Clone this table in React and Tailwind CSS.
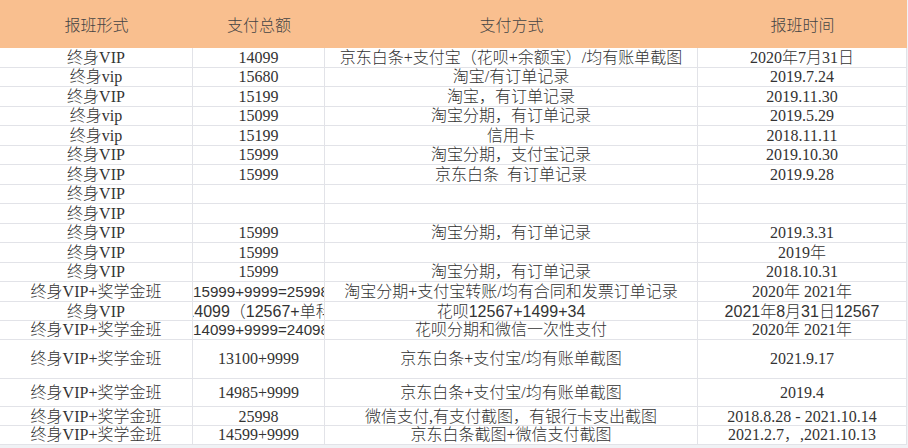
import React from 'react';

const serif = { fontFamily: '"Liberation Serif", "Noto Sans CJK SC", serif' };

// s: cells drawn in the sans font (Excel's default font in those cells)
// l: long numbers that run past the left-aligned cell edge
const rows = [
  { h: 'h-[19.5px]', c: ['终身VIP', '14099', '京东白条+支付宝（花呗+余额宝）/均有账单截图', '2020年7月31日'] },
  { h: 'h-[19.5px]', c: ['终身vip', '15680', '淘宝/有订单记录', '2019.7.24'] },
  { h: 'h-[19.5px]', c: ['终身VIP', '15199', '淘宝，有订单记录', '2019.11.30'] },
  { h: 'h-[19.5px]', c: ['终身vip', '15099', '淘宝分期，有订单记录', '2019.5.29'] },
  { h: 'h-[19.5px]', c: ['终身vip', '15199', '信用卡', '2018.11.11'] },
  { h: 'h-[19.5px]', c: ['终身VIP', '15999', '淘宝分期，支付宝记录', '2019.10.30'] },
  { h: 'h-[19.5px]', c: ['终身VIP', '15999', '京东白条  有订单记录', '2019.9.28'] },
  { h: 'h-[19.5px]', c: ['终身VIP', '', '', ''] },
  { h: 'h-[19.5px]', c: ['终身VIP', '', '', ''] },
  { h: 'h-[19.5px]', c: ['终身VIP', '15999', '淘宝分期，有订单记录', '2019.3.31'] },
  { h: 'h-[19.5px]', c: ['终身VIP', '15999', '', '2019年'] },
  { h: 'h-[19.5px]', c: ['终身VIP', '15999', '淘宝分期，有订单记录', '2018.10.31'] },
  { h: 'h-[20px]', c: ['终身VIP+奖学金班', '15999+9999=25998', '淘宝分期+支付宝转账/均有合同和发票订单记录', '2020年 2021年'], s: [1], l: [1] },
  { h: 'h-[19px]', c: ['终身VIP', '14099（12567+单科', '花呗12567+1499+34', '2021年8月31日12567'], s: [1, 2, 3] },
  { h: 'h-[18.5px]', c: ['终身VIP+奖学金班', '14099+9999=24098', '花呗分期和微信一次性支付', '2020年 2021年'], s: [1], l: [1] },
  { h: 'h-[39px]', c: ['终身VIP+奖学金班', '13100+9999', '京东白条+支付宝/均有账单截图', '2021.9.17'] },
  { h: 'h-[28.5px]', c: ['终身VIP+奖学金班', '14985+9999', '京东白条+支付宝/均有账单截图', '2019.4'] },
  { h: 'h-[19px]', c: ['终身VIP+奖学金班', '25998', '微信支付,有支付截图，有银行卡支出截图', '2018.8.28 - 2021.10.14'] },
  { h: 'h-[18.5px]', c: ['终身VIP+奖学金班', '14599+9999', '京东白条截图+微信支付截图', '2021.2.7，,2021.10.13'] },
];

const cols = 'grid grid-cols-[193px_132px_373px_209px]';

export default function App() {
  return (
    <div className="w-[908px] h-[448px] bg-[#f0f2f5] overflow-hidden" style={serif}>
      <div className="w-[907px] bg-white text-[16px] leading-[18px] text-[#333] font-light">
        <div className={`${cols} h-[48px] bg-[#f9bf8f] text-[#444]`}>
          {['报班形式', '支付总额', '支付方式', '报班时间'].map(t => (
            <div key={t} className="flex items-center justify-center pt-[3px]">{t}</div>
          ))}
        </div>
        {rows.map((r, i) => (
          <div key={i} className={`${cols} ${r.h}`}>
            {r.c.map((t, j) => {
              const sans = r.s && r.s.includes(j);
              const left = r.l && r.l.includes(j);
              return (
                <div
                  key={j}
                  className={`flex items-center overflow-hidden border-r border-b border-[#e2e3e8] pt-[1px] ${
                    left ? 'justify-start text-[15.2px]' : 'justify-center'
                  } ${sans ? 'font-["Liberation_Sans","Noto_Sans_CJK_SC",sans-serif]' : ''}`}
                >
                  <span className="whitespace-pre shrink-0">{t}</span>
                </div>
              );
            })}
          </div>
        ))}
      </div>
    </div>
  );
}
